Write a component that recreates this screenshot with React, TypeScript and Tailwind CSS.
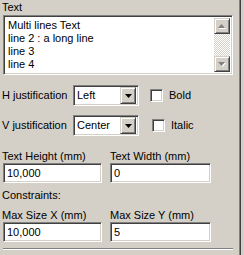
const sunken =
  "border border-t-[#808080] border-l-[#808080] border-b-white border-r-white shadow-[inset_1px_1px_0_#404040,inset_-1px_-1px_0_#d4d0c8]";
const raised =
  "border border-t-[#d4d0c8] border-l-[#d4d0c8] border-b-[#404040] border-r-[#404040] shadow-[inset_1px_1px_0_#ffffff,inset_-1px_-1px_0_#808080] bg-[#d4d0c8]";

function ArrowBtn({ up }: { up?: boolean }) {
  return (
    <div className={`${raised} w-[16px] h-[16px] flex items-center justify-center`}>
      <svg width="8" height="6" viewBox="0 0 8 6">
        {up ? (
          <>
            <path d="M4 2 L8 6 L1 6 Z" fill="#ffffff" />
            <path d="M3.5 1 L7 5 L0 5 Z" fill="#808080" />
          </>
        ) : (
          <>
            <path d="M1 2 L8 2 L4.5 6 Z" fill="#ffffff" />
            <path d="M0 1 L7 1 L3.5 5 Z" fill="#808080" />
          </>
        )}
      </svg>
    </div>
  );
}

function Combo({ value }: { value: string }) {
  return (
    <div className={`${sunken} bg-white w-[66px] h-[21px] flex items-center p-[2px]`}>
      <span className="flex-1 pl-[1px] leading-[13px]">{value}</span>
      <div className={`${raised} w-[16px] h-[17px] flex items-center justify-center`}>
        <svg width="7" height="4" viewBox="0 0 7 4">
          <path d="M0 0 L7 0 L3.5 4 Z" fill="#000000" />
        </svg>
      </div>
    </div>
  );
}

function Check({ label, ml }: { label: string; ml: string }) {
  return (
    <div className={`flex items-center ${ml}`}>
      <div className={`${sunken} bg-white w-[13px] h-[13px]`} />
      <span className="ml-[6px]">{label}</span>
    </div>
  );
}

function Field({ value, w }: { value: string; w: string }) {
  return (
    <div className={`${sunken} bg-white ${w} h-[20px] flex items-center pl-[3px]`}>
      {value}
    </div>
  );
}

export default function App() {
  return (
    <div className="flex w-[244px] h-[255px] overflow-hidden bg-[#d4d0c8] text-black text-[11px] leading-[13px] font-['Tahoma','Liberation_Sans',sans-serif]">
      <div className="w-[239px] flex flex-col pl-[2px] pt-[1px]">
        <div className="h-[14px]">Text</div>
        <div className={`${sunken} bg-white ml-[1px] w-[230px] h-[60px] flex p-[2px]`}>
          <div className="flex-1 pl-[2px] pt-[1px]">
            <div>Multi lines Text</div>
            <div>line 2 : a long line</div>
            <div>line 3</div>
            <div>line 4</div>
          </div>
          <div className="w-[16px] flex flex-col">
            <ArrowBtn up />
            <div className="flex-1 bg-[repeating-conic-gradient(#d4d0c8_0_25%,#ffffff_0_50%)] bg-[length:2px_2px]" />
            <ArrowBtn />
          </div>
        </div>

        <div className="flex items-center mt-[10px] h-[21px]">
          <span className="w-[71px]">H justification</span>
          <Combo value="Left" />
          <Check label="Bold" ml="ml-[11px]" />
        </div>
        <div className="flex items-center mt-[9px] h-[21px]">
          <span className="w-[71px]">V justification</span>
          <Combo value="Center" />
          <Check label="Italic" ml="ml-[13px]" />
        </div>

        <div className="flex mt-[14px] h-[13px]">
          <span className="w-[108px]">Text Height (mm)</span>
          <span>Text Width (mm)</span>
        </div>
        <div className="flex ml-[1px]">
          <Field value="10,000" w="w-[99px]" />
          <div className="w-[8px]" />
          <Field value="0" w="w-[101px]" />
        </div>

        <div className="mt-[6px] h-[13px]">Constraints:</div>
        <div className="flex mt-[7px] h-[13px]">
          <span className="w-[108px]">Max Size X (mm)</span>
          <span>Max Size Y (mm)</span>
        </div>
        <div className="flex ml-[1px]">
          <Field value="10,000" w="w-[99px]" />
          <div className="w-[8px]" />
          <Field value="5" w="w-[101px]" />
        </div>
        <div className="mt-[6px] ml-[1px] w-[230px] h-[2px] border-t border-t-[#808080] border-b border-b-white" />
      </div>
      <div className="w-[1px] bg-[#808080]" />
      <div className="w-[1px] bg-[#404040]" />
    </div>
  );
}
